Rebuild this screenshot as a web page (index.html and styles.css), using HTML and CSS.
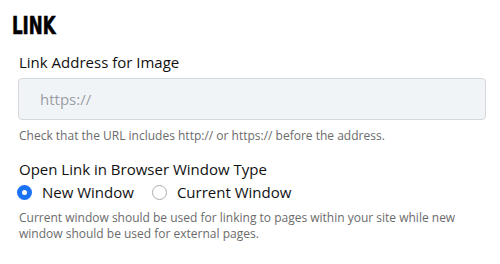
FILE: index.html
```html
<!DOCTYPE html>
<html>
<head>
<meta charset="utf-8">
<link rel="stylesheet" href="styles.css">
</head>
<body>
<div class="panel">
  <h2 class="title"><span>LINK</span></h2>
  <div class="field">
    <label class="label">Link Address for Image</label>
    <div class="input">https://</div>
    <p class="help">Check that the URL includes http:// or https:// before the address.</p>
  </div>
  <div class="field second">
    <div class="label">Open Link in Browser Window Type</div>
    <div class="radios">
      <div class="radio"><span class="dot checked"></span><span>New Window</span></div>
      <div class="radio"><span class="dot"></span><span>Current Window</span></div>
    </div>
    <p class="help desc">Current window should be used for linking to pages within your site while new window should be used for external pages.</p>
  </div>
</div>
</body>
</html>
```

FILE: styles.css
```css
html, body { margin: 0; padding: 0; background: #fff; }
body { font-family: "Open Sans", "Liberation Sans", sans-serif; color: #111; }
.panel { width: 500px; height: 264px; box-sizing: border-box; padding: 11px 14px 0 18px; }
.title { margin: 0 0 0 -6px; font-family: "DejaVu Sans", sans-serif; font-stretch: condensed; font-weight: bold; font-size: 25px; line-height: 30px; color: #000; }
.title span { display: inline-block; transform: scaleX(0.74); transform-origin: left center; -webkit-text-stroke: 0.6px #000; }
.field { display: flex; flex-direction: column; padding-left: 1px; }
.label { font-size: 15px; line-height: 20px; margin-top: 11px; color: #111; }
.second .label { margin-top: 15px; }
.input { margin: 6px 0 0 -1px; height: 42px; box-sizing: border-box; border: 1px solid #d3d8de; border-radius: 4px; background: #f1f4f7; padding-left: 21px; font-size: 15px; line-height: 40px; color: #9a9ea3; }
.help { margin: 8px 0 0; font-size: 12px; line-height: 16px; color: #6b6b6b; }
.radios { display: flex; gap: 20px; margin-top: 2px; }
.radio { display: flex; align-items: center; gap: 10px; font-size: 15px; line-height: 22px; }
.dot { width: 15px; height: 15px; box-sizing: border-box; border-radius: 50%; border: 1px solid #a8acb0; background: #fff; margin-left: -2px; }
.dot.checked { border: 5px solid #1a73f5; }
.desc { margin-top: 7px; }
```
